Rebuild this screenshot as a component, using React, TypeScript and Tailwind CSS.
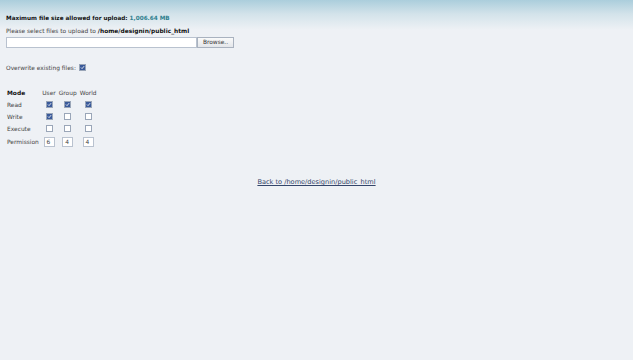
import { useState } from 'react';

function Box({ checked }: { checked?: boolean }) {
  return (
    <span className="inline-flex align-middle w-[7px] h-[7px] border border-[#9aa6b8] bg-white items-center justify-center">
      {checked && (
        <svg viewBox="0 0 8 8" className="w-[7px] h-[7px]">
          <rect x="0" y="0" width="8" height="8" fill="#3a5a9a" />
          <path d="M1.5 4 L3.3 5.8 L6.6 1.8" stroke="#fff" strokeWidth="1.3" fill="none" />
        </svg>
      )}
    </span>
  );
}

const ROWS = [
  { label: 'Read', perms: [true, true, true] },
  { label: 'Write', perms: [true, false, false] },
  { label: 'Execute', perms: [false, false, false] },
];

export default function App() {
  const [overwrite] = useState(true);

  return (
    <div className="w-[640px] h-[360px] flex bg-[#eef1f5] font-['DejaVu_Sans',sans-serif] text-[5.9px] text-[#333]">
      <div className="flex-1 flex flex-col items-start bg-[linear-gradient(to_bottom,#abcedc_0px,#d3e3ea_14px,#eef1f5_30px)] pl-[6px] pt-[15px]">
        {/* upload limit */}
        <div className="font-bold text-[#111] leading-[6px] text-[5.7px]">
          Maximum file size allowed for upload: <span className="text-[#2f7f8f]">1,006.64 MB</span>
        </div>
        <div className="mt-[7px] leading-[6px] text-[#444]">
          Please select files to upload to <span className="font-bold text-[#111]">/home/designin/public_html</span>
        </div>
        <div className="mt-[3px] flex items-center">
          <div className="w-[191px] h-[11px] bg-white border border-[#b9c2cf]" />
          <button className="w-[37px] h-[11px] border border-[#a9b2bf] bg-[linear-gradient(to_bottom,#fafafa,#e3e6ea)] text-[#333] text-[5.9px] leading-[9px]">
            Browse..
          </button>
        </div>

        {/* overwrite */}
        <div className="mt-[16px] flex items-center gap-[3px] leading-[6px] text-[#444]">
          <span>Overwrite existing files:</span>
          <Box checked={overwrite} />
        </div>

        {/* permissions */}
        <table className="mt-[16px] border-separate border-spacing-0 text-[#444]">
          <thead>
            <tr className="h-[12px]">
              <th className="text-left font-bold text-[#111] pr-[3px] pl-[1px]">Mode</th>
              <th className="font-normal px-[1.5px]">User</th>
              <th className="font-normal px-[1.5px]">Group</th>
              <th className="font-normal px-[1.5px]">World</th>
            </tr>
          </thead>
          <tbody>
            {ROWS.map((r) => (
              <tr key={r.label} className="h-[12px]">
                <td className="pl-[1px]">{r.label}</td>
                {r.perms.map((p, i) => (
                  <td key={i} className="text-center">
                    <Box checked={p} />
                  </td>
                ))}
              </tr>
            ))}
            <tr className="h-[14px]">
              <td className="pl-[1px] pr-[2px]">Permission</td>
              {['6', '4', '4'].map((v, i) => (
                <td key={i} className="text-center">
                  <span className="inline-block w-[11px] h-[10px] bg-white border border-[#b9c2cf] text-left pl-[2px] leading-[8px]">{v}</span>
                </td>
              ))}
            </tr>
          </tbody>
        </table>

        <div className="mt-[29px] -ml-[6px] self-stretch text-center">
          <a className="underline text-[#33456a] text-[6.6px]">Back to /home/designin/public_html</a>
        </div>
      </div>
      <div className="w-[7px] bg-white" />
    </div>
  );
}
